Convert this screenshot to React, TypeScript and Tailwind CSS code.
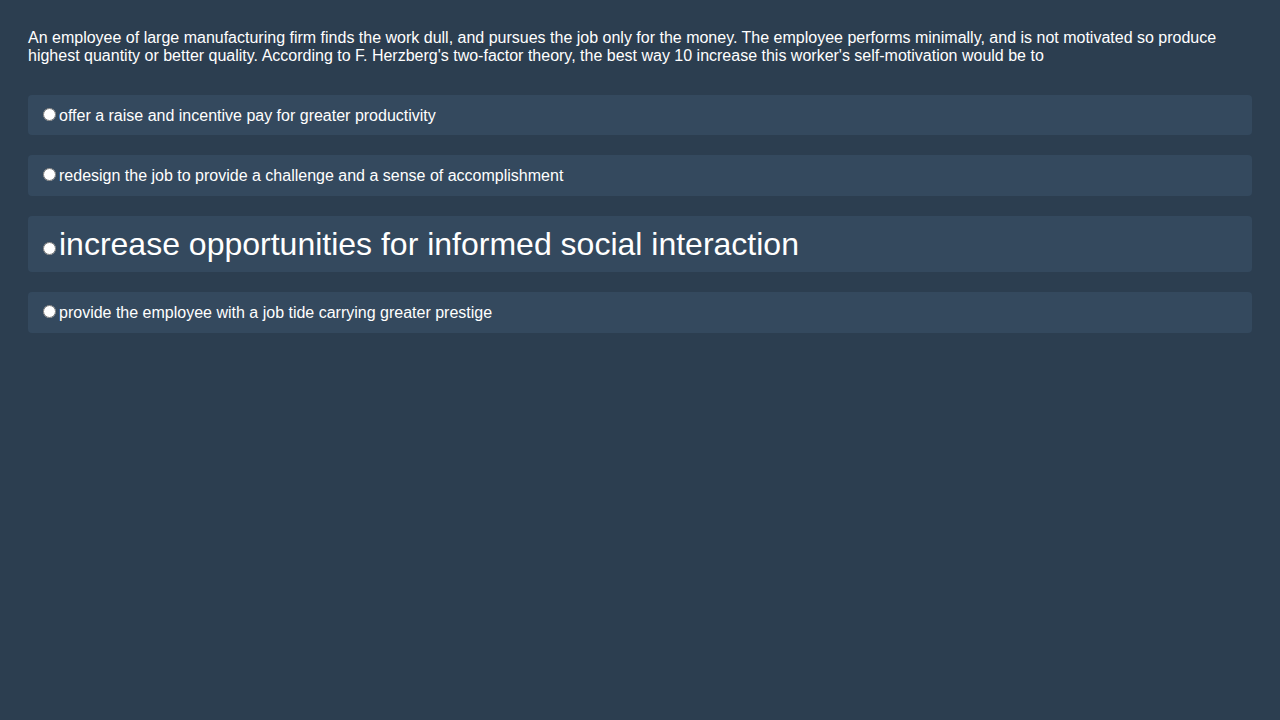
export default function App() {
  const options = [
    { text: "offer a raise and incentive pay for greater productivity", big: false },
    { text: "redesign the job to provide a challenge and a sense of accomplishment", big: false },
    { text: "increase opportunities for informed social interaction", big: true },
    { text: "provide the employee with a job tide carrying greater prestige", big: false },
  ];

  return (
    <div className="min-h-screen w-full bg-[#2c3e50] px-[28px] pt-[29px] pb-[28px] text-white font-['Liberation_Sans',Arial,sans-serif]">
      <p className="mb-[29px] text-base leading-[18.4px]">
        An employee of large manufacturing firm finds the work dull, and pursues the job only for the money. The employee performs minimally, and is not motivated so produce highest quantity or better quality. According to F. Herzberg's two-factor theory, the best way 10 increase this worker's self-motivation would be to
      </p>

      <div className="flex flex-col gap-5">
        {options.map((o, i) => (
          <label
            key={i}
            className={
              o.big
                ? "block rounded bg-[#34495e] p-[10px] text-[32px] leading-[36.8px]"
                : "block rounded bg-[#34495e] p-[10px] text-base leading-[18.4px]"
            }
          >
            <input type="radio" name="answer" className="m-[3px_3px_0_5px]" />
            {o.text}
          </label>
        ))}
      </div>
    </div>
  );
}
